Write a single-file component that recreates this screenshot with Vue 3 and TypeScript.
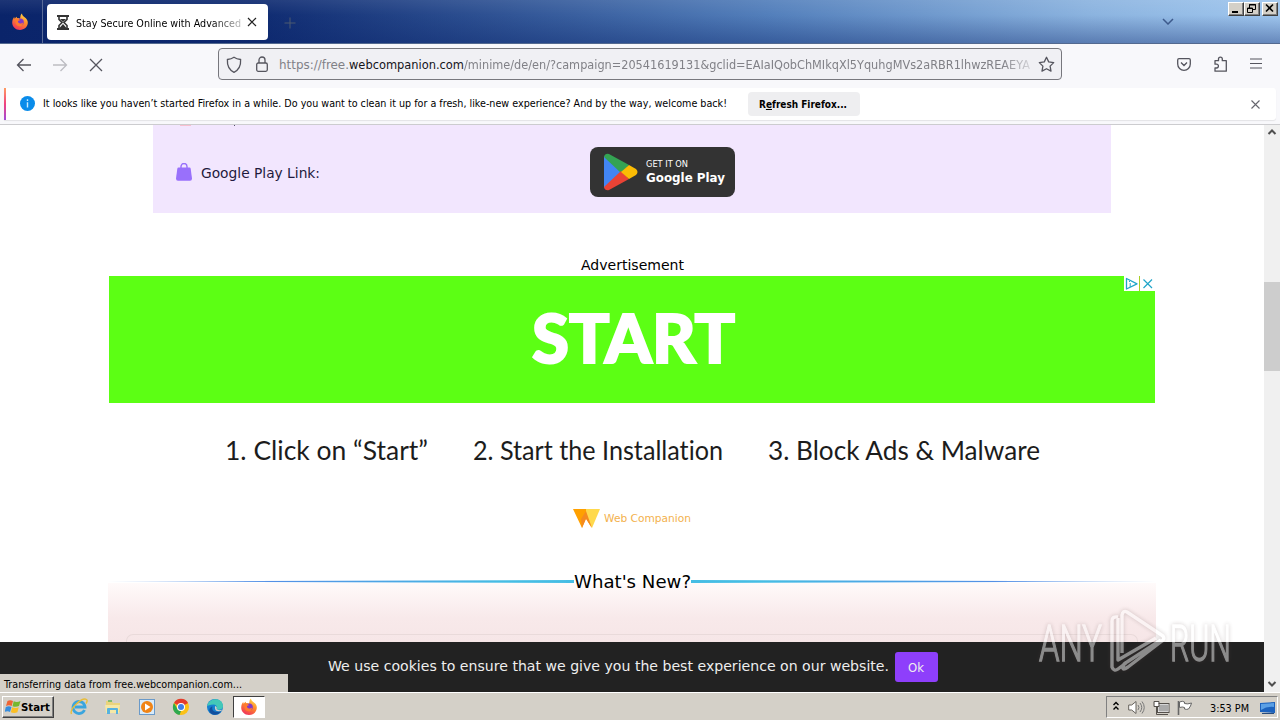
<script setup lang="ts">
import { defineComponent, h } from 'vue'

// One line of text set to an exact advance width.
const Line = defineComponent({
  props: {
    text: { type: String, required: true },
    w: { type: Number, required: true },
    h: { type: Number, default: 16 },
    base: { type: Number, default: 12 },
  },
  setup(props) {
    return () =>
      h('svg', { width: props.w, height: props.h, overflow: 'visible' }, [
        h(
          'text',
          { x: 0, y: props.base, textLength: props.w, lengthAdjust: 'spacingAndGlyphs', fill: 'currentColor' },
          props.text,
        ),
      ])
  },
})

const steps = [
  { text: '1. Click on “Start”', w: 203 },
  { text: '2. Start the Installation', w: 250 },
  { text: '3. Block Ads & Malware', w: 272 },
]
</script>

<template>
  <div class="screen">
    <svg class="defs" width="0" height="0">
      <defs>
        <linearGradient id="fxa" x1="0.8" y1="0" x2="0.3" y2="1">
          <stop offset="0" stop-color="#ffe14a" />
          <stop offset="0.45" stop-color="#ff8a2a" />
          <stop offset="1" stop-color="#f0325c" />
        </linearGradient>
        <symbol id="firefox" viewBox="0 0 18 18">
          <path d="M9 17C4.600 17 1.200 13.800 1.200 9.500c0-2.300 1-4.300 2-5.500l.5 1.800C4.500 4.500 5.200 4 5.800 3.700L6 5.200c1.200-.4 2.200-.2 3 .3L9.400 3.700C9.400 2.200 10.200 1.200 11 .5c.2 1.800 1 2.600 2.300 3.600 2.400 1.600 3.700 3.500 3.500 6C16.500 14 13.200 17 9 17z" fill="url(#fxa)" />
          <circle cx="9.200" cy="9" r="3.600" fill="#8038c8" />
          <path d="M4.500 6.200c1.700-.8 3.300-.3 4.700 1 -2 .1-2.700 1.200-1.900 2.400 1.200 1.600 3.400 1 4.700-.2 .2 2.700-1.700 4-3.800 3.900C5.200 13 3.800 9.500 4.500 6.200z" fill="#ff7a2e" />
        </symbol>
      </defs>
    </svg>

    <header class="tabbar">
      <div class="pinned"><svg width="18" height="18"><use href="#firefox" /></svg></div>
      <div class="tab">
        <svg class="hourglass" width="12" height="15" viewBox="0 0 12 15">
          <path d="M0 0h12v2H0zM0 13h12v2H0z" fill="#333" />
          <path d="M2 2v2.500L5 7.500 2 10.500V13M10 2v2.500L7 7.500l3 3V13" fill="none" stroke="#333" stroke-width="1.600" />
          <path d="M3 4h6L6 7zM6 9l3.500 4h-7z" fill="#333" />
        </svg>
        <Line class="ui tab-title" text="Stay Secure Online with Advanced" :w="165" />
        <svg class="tab-x" width="10" height="10" viewBox="0 0 10 10"><path d="M1 1l8 8M9 1L1 9" stroke="#222" stroke-width="1.200" /></svg>
      </div>
      <svg class="plus" width="12" height="12" viewBox="0 0 12 12"><path d="M6 .5v11M.5 6h11" stroke="#4d5b70" stroke-width="1" /></svg>
      <svg class="tabs-more" width="12" height="7" viewBox="0 0 12 7"><path d="M1 1l5 5 5-5" fill="none" stroke="#3d5a8c" stroke-width="1.500" /></svg>
      <div class="winbtns">
        <span class="wb"><svg width="13" height="11"><path d="M3 8h6v2H3z" /></svg></span>
        <span class="wb"><svg width="13" height="11"><path d="M4.500 5V1.500h6v5H8M4 2h7M2.500 5h5v4.500h-5zM2 5.500h6" fill="none" stroke="#000" /></svg></span>
        <span class="wb last"><svg width="13" height="11"><path d="M3 1.500l7 7M10 1.500l-7 7" stroke="#000" stroke-width="1.600" /></svg></span>
      </div>
    </header>

    <nav class="toolbar">
      <svg class="back" width="16" height="16" viewBox="0 0 16 16"><path d="M15 8H2M7.500 2L1.500 8l6 6" fill="none" stroke="#55555e" stroke-width="1.300" /></svg>
      <svg class="fwd" width="16" height="16" viewBox="0 0 16 16"><path d="M1 8h13M8.500 2l6 6-6 6" fill="none" stroke="#bdbdc2" stroke-width="1.300" /></svg>
      <svg class="stop" width="14" height="14" viewBox="0 0 14 14"><path d="M1 1l12 12M13 1L1 13" stroke="#55555e" stroke-width="1.300" /></svg>
      <div class="urlbar">
        <svg class="shield" width="16" height="18" viewBox="0 0 16 18"><path d="M8 1.200c2.200 1.500 4.300 2 6.600 2.300C15 9.500 13.500 13.500 8 16.300 2.500 13.500 1 9.500 1.400 3.500 3.700 3.200 5.800 2.700 8 1.200z" fill="none" stroke="#55555e" stroke-width="1.300" /></svg>
        <svg class="lock" width="12" height="16" viewBox="0 0 12 16"><rect x=".7" y="7" width="10.600" height="8.300" rx="1.500" fill="none" stroke="#55555e" stroke-width="1.300" /><path d="M3 7V4a3 3 0 0 1 6 0v3" fill="none" stroke="#55555e" stroke-width="1.300" /></svg>
        <Line class="url" text="https://free." :w="70" />
        <Line class="url host" text="webcompanion.com" :w="115" />
        <Line class="url tail" text="/minime/de/en/?campaign=20541619131&amp;gclid=EAIaIQobChMIkqXl5YquhgMVs2aRBR1lhwzREAEYA" :w="566" />
        <svg class="star" width="17" height="17" viewBox="0 0 17 17"><path d="M8.500 1.300l2.200 4.600 5 .7-3.600 3.500.9 5-4.500-2.400L4 15.100l.9-5L1.300 6.600l5-.7z" fill="none" stroke="#55555e" stroke-width="1.300" stroke-linejoin="round" /></svg>
      </div>
      <svg class="pocket" width="14" height="13" viewBox="0 0 14 13"><path d="M2 .7h10q1.300 0 1.300 1.300v4a6.300 6.300 0 0 1-12.600 0V2Q.7.700 2 .7zM4 4.500l3 3 3-3" fill="none" stroke="#55555e" stroke-width="1.300" /></svg>
      <svg class="ext" width="15" height="16" viewBox="0 0 15 16"><path d="M2 4.700h3.500V3a1.900 1.900 0 0 1 3.800 0v1.700h4v10.500H2V12h1.500a1.900 1.900 0 0 0 0-3.800H2z" fill="none" stroke="#55555e" stroke-width="1.300" stroke-linejoin="round" /></svg>
      <svg class="burger" width="12" height="11" viewBox="0 0 12 11"><path d="M0 1h12M0 5.500h12M0 10h12" stroke="#55555e" stroke-width="1.200" /></svg>
    </nav>

    <div class="notice">
      <div class="notice-card">
        <svg class="info" width="15" height="15" viewBox="0 0 15 15"><circle cx="7.500" cy="7.500" r="7.500" fill="#0a8cea" /><path d="M7.500 6.200v5.300M7.500 3.300v1.600" stroke="#c9ecff" stroke-width="1.400" /></svg>
        <Line class="ui notice-text" text="It looks like you haven’t started Firefox in a while. Do you want to clean it up for a fresh, like-new experience? And by the way, welcome back!" :w="684" />
        <button class="refresh">
          <svg width="88" height="16" overflow="visible"><text x="0" y="12" textLength="88" lengthAdjust="spacingAndGlyphs">R<tspan text-decoration="underline">e</tspan>fresh Firefox...</text></svg>
        </button>
        <svg class="notice-x" width="9" height="9" viewBox="0 0 9 9"><path d="M.5.500l8 8M8.500.500l-8 8" stroke="#66666e" stroke-width="1.100" /></svg>
      </div>
    </div>

    <div class="viewport">
      <main class="page">
        <section class="app-card">
          <div class="cut"><i class="cut-icon"></i><i class="cut-tail"></i></div>
          <svg class="bag" width="16" height="18" viewBox="0 0 16 18"><path d="M5 6V3.500a3 3 0 0 1 6 0V6" fill="none" stroke="#9970fb" stroke-width="1.400" /><path d="M2.500 4.500h11q1 0 1.200 1.200L16 15.500q0 2.300-2 2.300H2q-2 0-2-2.300L1.300 5.700q.2-1.200 1.200-1.200z" fill="#9970fb" /></svg>
          <Line class="body-text" text="Google Play Link:" :w="119" />
          <div class="play-badge">
            <svg width="34" height="38" viewBox="0 0 34 38">
              <path d="M0 3v32L18 19z" fill="#4285f4" />
              <path d="M0 4Q1 0 5 1l20 11-8 8z" fill="#34a353" />
              <path d="M0 34q1 4 5 3l20-11-8-8z" fill="#ea4335" />
              <path d="M25 12l7 4q3 3 0 6l-7 4-8-7z" fill="#fbbc04" />
            </svg>
            <div class="play-words">
              <Line class="get" text="GET IT ON" :w="42" :h="11" :base="9" />
              <Line class="gp" text="Google Play" :w="79" :h="17" :base="13" />
            </div>
          </div>
        </section>

        <div class="ad-label"><Line class="body-text black" text="Advertisement" :w="103" /></div>
        <section class="ad-banner">
          <Line class="start" text="START" :w="203" :h="60" :base="51" />
          <div class="adchoices">
            <svg width="15" height="15" viewBox="0 0 15 15"><path d="M2.500 2.500v10.500l10.500-5.200z" fill="none" stroke="#20a5c9" stroke-width="1.300" stroke-linejoin="round" /><path d="M6.200 7v4M5.500 5v1" stroke="#20a5c9" /></svg>
            <i class="sep"></i>
            <svg width="15" height="15" viewBox="0 0 15 15"><path d="M3.500 3.500l8.500 8.500M12 3.500l-8.500 8.500" stroke="#20a5c9" stroke-width="1.200" /></svg>
          </div>
        </section>
        <div class="steps">
          <Line v-for="s in steps" :key="s.text" class="step" :text="s.text" :w="s.w" :h="36" :base="26" />
        </div>
        <div class="brand">
          <svg width="27" height="19" viewBox="0 0 27 19"><path d="M0 0h14l4 18L13 9 9 19z" fill="#ffa000" /><path d="M13 0h14l-8 19-6-10z" fill="#ffd94d" /><path d="M8 10l5-8 6 17-6-9-4 9z" fill="#f58a1f" /></svg>
          <Line class="brand-name" text="Web Companion" :w="87" />
        </div>
        <section class="news">
          <div class="news-head"><i class="rule left"></i><Line class="news-title" text="What's New?" :w="117" :h="20" :base="15" /><i class="rule right"></i></div>
          <div class="news-body"><div class="news-card"></div></div>
        </section>
        <footer class="cookies">
          <Line class="cookie-text" text="We use cookies to ensure that we give you the best experience on our website." :w="561" />
          <button class="ok"><Line text="Ok" :w="16" /></button>
        </footer>
      </main>
      <aside class="scrollbar">
        <svg class="up" width="10" height="6" viewBox="0 0 10 6"><path d="M1.500 5L5 1.500 8.500 5" fill="none" stroke="#505050" stroke-width="2" /></svg>
        <div class="thumb"></div>
        <svg class="down" width="10" height="6" viewBox="0 0 10 6"><path d="M1.500 1L5 4.500 8.500 1" fill="none" stroke="#505050" stroke-width="2" /></svg>
      </aside>
      <div class="status"><Line class="ui" text="Transferring data from free.webcompanion.com..." :w="238" /></div>
      <svg class="watermark" width="204" height="74" viewBox="0 0 204 74" overflow="visible">
        <g class="wm-text">
          <text x="1" y="52" textLength="63" lengthAdjust="spacingAndGlyphs">ANY</text>
          <text x="132" y="52" textLength="61" lengthAdjust="spacingAndGlyphs">RUN</text>
        </g>
        <path d="M80 8q-6-1-6 4v46q2 5 6 2l8-6M80 9v42l38-22M84 44V6q1-5 5-3l36 24q2 3-1 5L90 58q-6 4-5 0 0-3 4-5l34-22" class="wm-mark" />
      </svg>
    </div>

    <footer class="taskbar">
      <div class="start-btn">
        <svg width="16" height="15" viewBox="0 0 16 15">
          <path d="M2.500 2Q5 .5 8 2L6.700 7Q4 5.500 1 7z" fill="#ef6534" /><path d="M8.700 2.300Q12 4 15.500 2L14 7q-3 1.500-6.500.300z" fill="#76b82f" />
          <path d="M.8 7.900Q4 6.500 6.500 8L5 13Q2.500 11.500-.3 13z" fill="#368ddd" /><path d="M7.200 8.300q3.500 1.500 6.500 0l-1.300 5Q9 14.800 5.800 13.300z" fill="#fbbf24" />
        </svg>
        <Line class="start-text" text="Start" :w="29" />
      </div>
      <div class="launch">
        <svg width="18" height="18" viewBox="0 0 18 18"><path d="M14.500 12a6 6 0 1 1 .5-3H5" fill="none" stroke="#3aa5de" stroke-width="2.800" /><path d="M1.500 16C-1 11 12-1 16.500 1.500c1 .8.500 2.500-.5 4" fill="none" stroke="#e9bd37" stroke-width="1.400" /></svg>
        <svg width="18" height="18" viewBox="0 0 18 18"><path d="M2 3h6l1 2h7v9H2z" fill="#ead47c" /><path d="M1 7h15l-1 8H2z" fill="#f5e8a6" /><path d="M3 16v-5q0-1 1-1h9q1 0 1 1v5h-2v-4H6v4z" fill="#57b2df" /><path d="M4 3h4" stroke="#62b55d" stroke-width="1.500" /></svg>
        <svg width="18" height="18" viewBox="0 0 18 18"><rect x="1.500" y="1.500" width="15" height="15" fill="#d8ebfa" stroke="#6a9ac9" /><circle cx="9" cy="9" r="6" fill="#f08416" /><path d="M7 5.500v7L12.500 9z" fill="#fff" /></svg>
        <svg width="18" height="18" viewBox="0 0 18 18"><circle cx="9" cy="9" r="8" fill="#fbc116" /><path d="M9 9L2 5a8 8 0 0 1 14 0z" fill="#e33b2e" /><path d="M2 5l4 7 3 1-1.500 4A8 8 0 0 1 2 5z" fill="#2da94f" /><circle cx="9" cy="9" r="4" fill="#fff" /><circle cx="9" cy="9" r="3" fill="#3f7fe8" /></svg>
        <svg width="18" height="18" viewBox="0 0 18 18"><circle cx="9" cy="9" r="8" fill="#1580d0" /><path d="M1.200 8C3-1 17-1 17 8.500c0 3-4 4-6.500 2.500 1-2 0-4.500-3-4.500C4 6.500 1.500 8 1.200 8z" fill="#43c8b8" /><path d="M6.500 8.500c-1.500 5 3.500 6.500 8.500 4.500-2 4-7 5-10 2.500S3.500 9 6.500 8.500z" fill="#124f9d" /><path d="M9 8q2.500 1 1.500 3 2.500 2 6 .5L15 13q-7 1.500-6-5z" fill="#d4d0c8" /></svg>
      </div>
      <div class="task-active"><svg width="18" height="18"><use href="#firefox" /></svg></div>
      <div class="tray">
        <svg class="chev" width="6" height="10" viewBox="0 0 6 10"><path d="M.5 4L3 1.500 5.500 4M.5 8.500L3 6l2.500 2.500" fill="none" stroke="#000" stroke-width="1.400" /></svg>
        <svg class="vol" width="17" height="15" viewBox="0 0 17 15"><path d="M.7 5h3L8 1.500v12L3.700 10h-3z" fill="#fff" stroke="#66625c" /><path d="M10 5q2 2.500 0 5M12 3q3.500 4.500 0 9M14 1.500q4.500 6 0 12" fill="none" stroke="#777" /></svg>
        <svg class="net" width="17" height="16" viewBox="0 0 17 16"><rect x="5" y="4" width="10.500" height="8" fill="#aaa" stroke="#fff" /><rect x="4.500" y="3.500" width="11.500" height="9" fill="none" stroke="#55514c" /><path d="M1.500 2h4v4h-4z" fill="#fff" /><path d="M7 14.500h8M1 1.500h5v5H1zM3.500 7v7.500h4" fill="none" stroke="#55514c" /></svg>
        <svg class="flag" width="16" height="16" viewBox="0 0 16 16"><path d="M1.500 1v14" stroke="#666" stroke-width="1.600" /><path d="M2.500 2q3-1.500 5 0v1.500q3 1 7-.5-.5 3-3 6-2 .8-4 0V7.500q-2-1-5 0z" fill="#fff" stroke="#666" /></svg>
        <Line class="ui clock" text="3:53 PM" :w="39" />
        <svg class="desk" width="15" height="13" viewBox="0 0 15 13"><path d="M0 1l15-1v11l-15-1z" fill="#1c62bd" /><path d="M1 2l13-1v4Q7 4 1 8z" fill="#5ba0e5" /><path d="M2 11.500h12" stroke="#274b7b" /></svg>
      </div>
    </footer>
  </div>
</template>

<style>
body { margin: 0; overflow: hidden; }
</style>

<style scoped>
.screen { width: 1280px; height: 720px; overflow: hidden; display: flex; flex-direction: column; background: #fff; font-family: "DejaVu Sans", Verdana, sans-serif; color: #000; }
.screen * { box-sizing: border-box; }
svg { display: block; flex: none; }
button { border: 0; padding: 0; margin: 0; font-family: inherit; display: flex; align-items: flex-start; }
.defs { position: absolute; }
.ui { font-family: "DejaVu Sans Condensed", "DejaVu Sans", sans-serif; font-size: 11px; }

.tabbar { height: 44px; flex: none; display: flex; border-bottom: 1px solid #53698f; background: linear-gradient(180deg, rgba(255,255,255,.08), rgba(10,36,106,0) 35%, rgba(10,36,106,.38)), linear-gradient(90deg, #0a246a 0, #0f2b71 20%, #537fbb 60%, #8bb3df 85%, #9fc6ee 100%); }
.pinned { width: 43px; padding: 13px 0 0 11px; border-right: 1px solid #596b98; }
.tab { margin: 4px 0 0 4px; width: 221px; height: 36px; border-radius: 4px; background: #fff; display: flex; }
.hourglass { margin: 11px 7px 0 10px; }
.tab-title { margin-top: 11px; -webkit-mask-image: linear-gradient(90deg, #000 82%, rgba(0,0,0,.25)); mask-image: linear-gradient(90deg, #000 82%, rgba(0,0,0,.25)); }
.tab-x { margin: 13px 0 0 6px; }
.plus { margin: 17px 0 0 16px; }
.tabs-more { margin: 18px 0 0 auto; }
.winbtns { display: flex; margin: 2px 2px 0 54px; }
.wb { width: 16px; height: 14px; background: #d4d0c8; border: 1px solid; border-color: #fff #404040 #404040 #fff; box-shadow: inset -1px -1px #808080; }
.wb.last { margin-left: 2px; }

.toolbar { height: 44px; flex: none; background: #f8f8fb; display: flex; align-items: flex-start; }
.back { margin: 13px 0 0 16px; }
.fwd { margin: 13px 0 0 20px; }
.stop { margin: 14px 0 0 21px; }
.urlbar { margin: 4px 0 0 115px; width: 844px; height: 32px; border: 1px solid #77777d; border-radius: 4px; background: #f0f0f4; display: flex; }
.shield { margin: 7px 0 0 7px; }
.lock { margin: 7px 11px 0 14px; }
.url { margin-top: 8px; font-size: 13px; font-family: "DejaVu Sans", sans-serif; color: #818187; }
.host { color: #15141a; }
.tail { -webkit-mask-image: linear-gradient(90deg, #000 95%, rgba(0,0,0,.25)); mask-image: linear-gradient(90deg, #000 95%, rgba(0,0,0,.25)); }
.star { margin: 7px 0 0 8px; }
.pocket { margin: 14px 0 0 115px; }
.ext { margin: 12px 0 0 22px; }
.burger { margin: 14px 0 0 22px; }

.notice { height: 37px; flex: none; background: #f8f8fb; border-bottom: 1px solid #cccccf; padding: 0 4px; }
.notice-card { position: relative; height: 32px; background: #fff; display: flex; border-radius: 0 3px 3px 0; box-shadow: 0 1px 1px #e3e3e6; }
.notice-card::before { content: ""; width: 2px; height: 32px; background: linear-gradient(#ff9c62, #f0417f 50%, #a04bd8); }
.info { margin: 8px 8px 0 14px; }
.notice-text { margin-top: 7px; }
.refresh { margin: 4px 0 0 21px; width: 112px; height: 24px; padding: 4px 0 0 11px; border-radius: 4px; background: #eeeef0; font-size: 10px; font-weight: bold; }
.notice-x { margin: 12px 16px 0 auto; }

.viewport { position: relative; height: 567px; flex: none; display: flex; }
.page { width: 1264px; height: 567px; display: flex; flex-direction: column; }
.app-card { position: relative; margin-left: 153px; width: 958px; height: 88px; flex: none; background: #f2e6fe; display: flex; color: #1f1a3d; }
.cut { position: absolute; left: 27px; top: 0; display: flex; gap: 43px; }
.cut-icon { width: 11px; height: 1px; background: #f8bfcf; }
.cut-tail { width: 1px; height: 1px; background: #55506c; }
.bag { margin: 38px 9px 0 23px; }
.body-text { margin-top: 41px; font-size: 14.500px; }
.play-badge { margin: 22px 0 0 270px; width: 145px; height: 50px; border-radius: 8px; background: #333; display: flex; padding: 6px 0 0 14px; color: #fff; }
.play-words { margin: 5px 0 0 8px; }
.get { font-size: 8.500px; }
.gp { font-size: 12.500px; font-weight: bold; }
.ad-label { height: 63px; flex: none; padding-left: 581px; }
.ad-label .black { margin-top: 45px; color: #000; }
.ad-banner { position: relative; margin-left: 109px; width: 1046px; height: 127px; flex: none; background: #5cff14; padding: 36px 0 0 423px; }
.start { font: 900 66px Lato, sans-serif; color: #fff; stroke: #fff; stroke-width: 2; }
.adchoices { position: absolute; right: 0; top: 0; width: 31px; height: 15px; background: #fff; display: flex; }
.sep { width: 1px; height: 15px; background: #a9cf26; }
.steps { height: 105px; flex: none; display: flex; gap: 45px; padding: 31px 0 0 225px; }
.step { font: 400 26.500px Lato, sans-serif; font-variant-ligatures: none; color: #1c1c1c; }
.brand { height: 63px; flex: none; display: flex; gap: 4px; padding: 1px 0 0 573px; }
.brand-name { font-size: 10px; color: #f3b14d; margin-top: 1px; }
.news { margin-left: 108px; width: 1048px; height: 71px; flex: none; position: relative; }
.news-head { display: flex; height: 20px; padding-top: 2px; position: relative; }
.news-title { font-size: 17px; }
.rule { height: 3px; margin-top: 7px; }
.left { width: 466px; clip-path: polygon(0 45%, 100% 0, 100% 100%, 0 55%); background: linear-gradient(90deg, transparent, #538fe5 35%, #46bde4 85%); }
.right { width: 465px; clip-path: polygon(0 0, 100% 45%, 100% 55%, 0 100%); background: linear-gradient(270deg, transparent, #538fe5 35%, #46bde4 85%); }
.news::before { content: ""; position: absolute; inset: 12px 0 0; background: linear-gradient(#fffafa, #f8e9ea 60%, #f6e6e7); }
.news-body { position: relative; padding: 43px 18px 0; margin-top: -11px; padding-top: 43px; }
.news-card { height: 8px; margin-top: 11px; margin-bottom: 0; border: 1px solid #e9dada; border-bottom: 0; border-radius: 7px 7px 0 0; }
.news-body { margin-top: 0; padding-top: 32px; }
.cookies { position: relative; height: 50px; flex: none; background: #222; display: flex; color: #fff; padding-left: 328px; }
.cookie-text { margin-top: 17px; font-size: 14.500px; color: #eee; }
.ok { width: 43px; height: 30px; margin: 10px 0 0 6px; padding: 8px 0 0 13px; border-radius: 3px; background: #8e3ffb; color: #eee; font-size: 12.500px; }
.scrollbar { width: 16px; height: 567px; background: #f0f0f0; display: flex; flex-direction: column; align-items: center; }
.up { margin-top: 4px; }
.thumb { width: 16px; height: 89px; margin-top: 147px; background: #cdcdcd; flex: none; }
.down { margin: auto 0 5px; }
.status { position: absolute; left: 0; bottom: 0; width: 288px; height: 18px; background: #d4d0c8; padding: 2px 0 0 4px; }
.watermark { position: absolute; left: 1038px; top: 484px; opacity: .48; filter: drop-shadow(0 0 2px rgba(90,70,70,.55)); }
.wm-text { font: 300 50px Roboto, sans-serif; fill: #fff; stroke: #fff; stroke-width: 1.4; }
.wm-mark { fill: none; stroke: #fff; stroke-width: 3.4; stroke-linejoin: round; }

.taskbar { height: 28px; flex: none; background: #d4d0c8; border-top: 1px solid #fff; display: flex; align-items: flex-start; }
.start-btn { margin: 3px 0 0 2px; width: 52px; height: 22px; border: 1px solid; border-color: #fff #404040 #404040 #fff; box-shadow: inset -1px -1px #808080; display: flex; padding: 2px 0 0 2px; gap: 0; }
.start-text { font: bold 11px "DejaVu Sans Condensed", sans-serif; }
.launch { display: flex; gap: 16px; margin: 5px 0 0 16px; width: 163px; }
.task-active { width: 32px; height: 22px; margin-top: 3px; background: #fff; border: 1px solid; border-color: #404040 #fff #fff #404040; padding: 1px 0 0 6px; }
.tray { margin: 3px 2px 0 auto; width: 172px; height: 22px; border: 1px solid; border-color: #808080 #fff #fff #808080; display: flex; }
.chev { margin: 4px 0 0 6px; }
.vol { margin: 3px 0 0 9px; }
.net { margin: 3px 0 0 8px; }
.flag { margin: 3px 0 0 7px; }
.clock { margin: 3px 0 0 17px; }
.desk { margin: 5px 0 0 11px; }
</style>
